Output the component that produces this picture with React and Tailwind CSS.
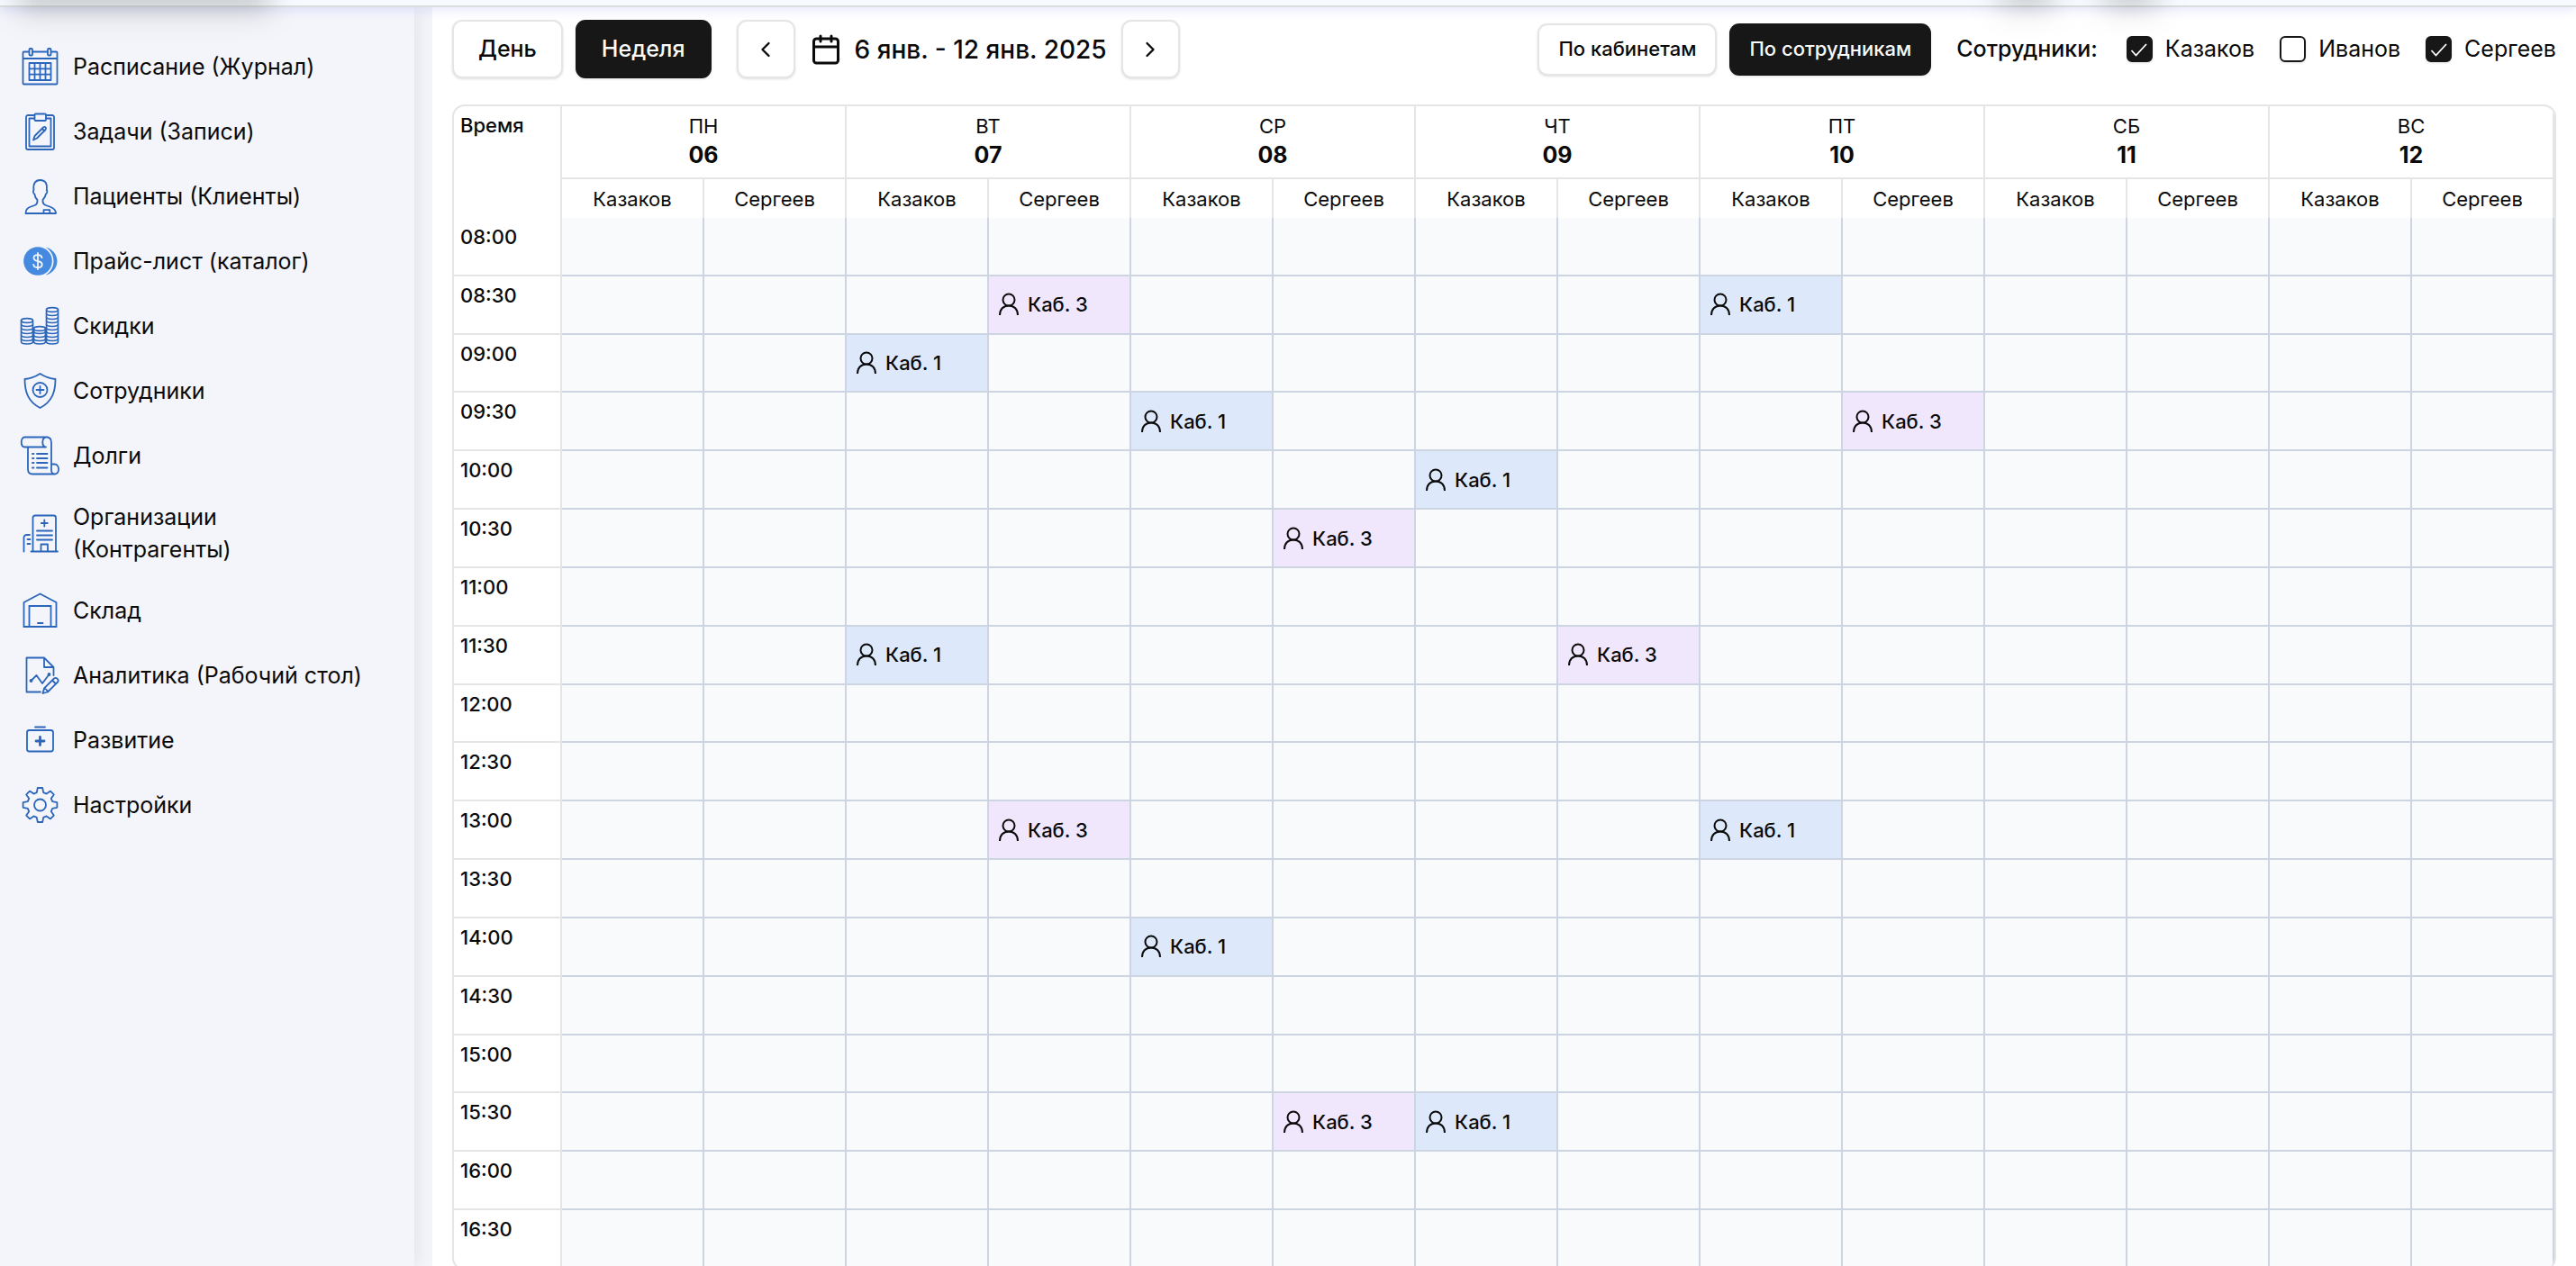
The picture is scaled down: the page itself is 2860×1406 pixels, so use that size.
import { Calendar, ChevronLeft, ChevronRight } from "lucide-react";

const iconProps = {
  viewBox: "0 0 44 44",
  fill: "none",
  stroke: "#2b66bb",
  strokeWidth: 1.8,
  strokeLinejoin: "round",
  strokeLinecap: "round",
  className: "size-11 shrink-0",
  "aria-hidden": true,
};

function ScheduleIcon() {
  return (
    <svg {...iconProps}>
      <path d="M10 5.500H4.500a1 1 0 0 0-1 1v34a1 1 0 0 0 1 1h36a1 1 0 0 0 1-1v-34a1 1 0 0 0-1-1H35M14 5.500h16.500M3.500 13h38" />
      <rect x="10.500" y="2" width="3.500" height="7.500" rx="1" />
      <rect x="31" y="2" width="3.500" height="7.500" rx="1" />
      <path d="M10.500 18h24v19h-24zM16.500 18v19M22.500 18v19M28.500 18v19M10.500 24.300h24M10.500 30.600h24" />
    </svg>
  );
}

function TasksIcon() {
  return (
    <svg {...iconProps}>
      <path d="M16 4H9a2 2 0 0 0-2 2v34a2 2 0 0 0 2 2h27a2 2 0 0 0 2-2V6a2 2 0 0 0-2-2h-7" />
      <path d="M16 7.500h-5.500v31h24v-31H29" />
      <rect x="16.500" y="2.500" width="12.500" height="7.500" rx="1" />
      <path d="m16.500 27 9.500-9.500c2-1.500 4 .5 2.500 2.500L19 29.500l-4 2zM25 19l2.500 2.500" />
    </svg>
  );
}

function PatientsIcon() {
  return (
    <svg {...iconProps}>
      <path d="M6.500 41c0-3.500 1-5.500 4.500-7l5.500-2c2.500-1 3-2.500 3-4.500v-1.500c-2-2-2.800-4-3.200-6.500-1.300-.8-2-3.500-.8-4.500-1-6.500 1.500-11 7-11 6.500 0 8 4.500 7.300 11 1 1 .5 3.700-.9 4.500-.4 2.500-1.400 4.500-3.400 6.500v1.500c0 2 1 3.500 3.500 4.500l5.500 2c3.500 1.500 5.500 3.500 5.500 7z" />
      <path d="M26.500 41v-3.800h6.800V41" />
    </svg>
  );
}

function PriceIcon() {
  return (
    <svg {...iconProps} stroke="none">
      <circle cx="20" cy="22" r="15.800" fill="#438ae0" />
      <path d="M28.500 6.500C35 7.500 41.500 14 41.500 22s-6.500 14.500-13 15.500c5.500-3 9-9 9-15.500s-3.500-12.500-9-15.500z" fill="#438ae0" />
      <path d="M24.500 18.200c-.4-2-2.200-3-4.500-3-2.600 0-4.500 1.200-4.500 3.300 0 2.200 1.800 2.900 4.500 3.500 2.900.6 4.700 1.400 4.700 3.700 0 2.100-2 3.400-4.700 3.400-2.500 0-4.500-1.100-4.800-3.300M20 13v18" fill="none" stroke="#f4f5fa" strokeWidth="1.800" />
    </svg>
  );
}

function CoinStack({ x, tops }) {
  return (
    <g>
      <ellipse cx={x} cy={tops[0]} rx="6.500" ry="2.400" />
      <path d={`M${x - 6.5} ${tops[0]}V39.500c0 3.300 13 3.300 13 0V${tops[0]}`} />
      {tops.slice(1).map((y) => (
        <path key={y} d={`M${x - 6.5} ${y}c0 3.300 13 3.300 13 0`} />
      ))}
    </g>
  );
}

function DiscountIcon() {
  return (
    <svg {...iconProps} strokeWidth="1.600">
      <CoinStack x={8} tops={[16, 20, 24, 28, 32, 36]} />
      <CoinStack x={22} tops={[25, 28, 32, 36]} />
      <CoinStack x={36} tops={[4, 8, 12, 16, 20, 24, 28, 32, 36]} />
    </svg>
  );
}

function StaffIcon() {
  return (
    <svg {...iconProps}>
      <path d="M22.500 3C17 6.500 11.500 8.500 5.500 9c0 14 3.500 25 17 32C36 34 39.500 23 39.500 9c-6-.5-11.500-2.500-17-6z" />
      <circle cx="22.500" cy="21" r="8" />
      <path d="M22.500 17v8M18.500 21h8" />
    </svg>
  );
}

function DebtsIcon() {
  return (
    <svg {...iconProps}>
      <path d="M31 1.500H5.500c-5 0-5 11 0 11H29M28 12.500c-4-2-3.500-11 1.500-11 4 0 5.500 3 5.500 6V38c0 2.500 1.500 4.500 4 4.500M9 12.500V37c0 3.500 2 5.500 5 5.500h25c5.500 0 5.500-11-.5-11H35" />
      <path d="M14 20h1.500M19 20h11.500M14 25h1.500M19 25h11.500M14 30h1.500M19 30h11.500M14 35.500h1.500M19 35.500h11.500" />
    </svg>
  );
}

function OrganizationIcon() {
  return (
    <svg {...iconProps}>
      <path d="M12.500 42.500h29.500M14.500 42.500V5a2.500 2.500 0 0 1 2.500-2.500h20.500A2.500 2.500 0 0 1 40 5v37.500M27.300 7.500v7M23.800 11h7M19 19.500h17M19 24.500h17M19 29.500h17M23.500 42.500v-8h7.500v8M4.500 42.500V27a3 3 0 0 1 3-3h3.500M8.500 29h3M8.500 34h3" />
    </svg>
  );
}

function WarehouseIcon() {
  return (
    <svg {...iconProps} strokeLinejoin="miter">
      <path d="M4.500 13 22.500 3.500 40.500 13v27h-36zM10.500 40V17h24v23M20 36h5.500" />
    </svg>
  );
}

function AnalyticsIcon() {
  return (
    <svg {...iconProps}>
      <path d="M23 40.500H7.500v-38H27L37.500 13v9M27 2.500V13h10.500M12.500 28l6-6 6.500 9 7.500-10" />
      <circle cx="12.500" cy="28" r="1" fill="#2b66bb" />
      <circle cx="32.500" cy="21" r="1" fill="#2b66bb" />
      <path d="m27 36.500 11-11c2.500-2 6 1.500 4 4L31 40.500l-5.500 1.500zM36 27.500l4 4M27 36.500c2 .5 3.500 2 4 4" />
    </svg>
  );
}

function GrowthIcon() {
  return (
    <svg {...iconProps}>
      <rect x="8" y="11" width="29" height="23.500" rx="2.500" />
      <path d="M17 7.500h11" />
      <path d="M22.500 18.500v9M18 23h9" strokeWidth="2.800" />
    </svg>
  );
}

function SettingsIcon() {
  return (
    <svg {...iconProps}>
      <path d="M19.800 3h5.400l1 5.200 3.400 1.400 4.400-3 3.800 3.800-3 4.400 1.400 3.400 5.200 1v5.600l-5.200 1-1.400 3.400 3 4.400-3.800 3.800-4.400-3-3.400 1.400-1 5.200h-5.400l-1-5.200-3.400-1.400-4.400 3-3.800-3.800 3-4.400-1.400-3.400-5.200-1v-5.600l5.200-1 1.400-3.400-3-4.400 3.800-3.800 4.400 3 3.400-1.400z" />
      <circle cx="22.500" cy="22" r="6.500" />
    </svg>
  );
}

const menu = [
  ["Расписание (Журнал)", ScheduleIcon],
  ["Задачи (Записи)", TasksIcon],
  ["Пациенты (Клиенты)", PatientsIcon],
  ["Прайс-лист (каталог)", PriceIcon],
  ["Скидки", DiscountIcon],
  ["Сотрудники", StaffIcon],
  ["Долги", DebtsIcon],
  ["Организации (Контрагенты)", OrganizationIcon],
  ["Склад", WarehouseIcon],
  ["Аналитика (Рабочий стол)", AnalyticsIcon],
  ["Развитие", GrowthIcon],
  ["Настройки", SettingsIcon],
];

const days = [
  ["ПН", "06"],
  ["ВТ", "07"],
  ["СР", "08"],
  ["ЧТ", "09"],
  ["ПТ", "10"],
  ["СБ", "11"],
  ["ВС", "12"],
];

const staff = ["Казаков", "Сергеев"];
const rooms = ["Каб. 1", "Каб. 3"];
const roomColors = ["bg-[#dde9fb]", "bg-[#f1e7fc]"];

const times = Array.from({ length: 18 }, (_, i) => {
  const hour = String(8 + Math.floor(i / 2)).padStart(2, "0");
  return `${hour}:${i % 2 ? "30" : "00"}`;
});

// Column = day index * 2 + staff index.
const bookings = {
  "08:30": [3, 8],
  "09:00": [2],
  "09:30": [4, 9],
  "10:00": [6],
  "10:30": [5],
  "11:30": [2, 7],
  "13:00": [3, 8],
  "14:00": [4],
  "15:30": [5, 6],
};

const columns = Array.from({ length: 14 }, (_, i) => i);

function UserIcon() {
  return (
    <svg viewBox="0 0 22 26" fill="none" stroke="currentColor" strokeWidth="2" className="h-[26px] w-[22px] shrink-0" aria-hidden="true">
      <circle cx="11" cy="8" r="6.500" />
      <path d="M1 25c0-6.500 4-10.500 10-10.500S21 18.500 21 25" />
    </svg>
  );
}

function StaffCheckbox({ name, checked }) {
  return (
    <label className="flex items-center gap-3.5">
      <span className="grid size-[29px] place-items-center">
        <input
          type="checkbox"
          defaultChecked={checked}
          className="peer col-start-1 row-start-1 size-[29px] appearance-none rounded-md border-2 border-[#171717] bg-white shadow-sm checked:bg-[#171717]"
        />
        <svg viewBox="0 0 20 20" fill="none" stroke="white" strokeWidth="1.800" className="invisible col-start-1 row-start-1 size-5 peer-checked:visible" aria-hidden="true">
          <path d="m1.500 11 5 5.500L18 4" />
        </svg>
      </span>
      {name}
    </label>
  );
}

function Sidebar() {
  return (
    <aside className="w-[480px] shrink-0 overflow-hidden bg-[#f4f5fa]">
      <nav className="h-full w-[460px] pt-[30px] shadow-[0_0_22px_rgba(0,0,0,0.1)]">
        <ul>
          {menu.map(([label, Icon]) => (
            <li key={label}>
              <a href="#" className="flex items-center gap-[15px] py-3.5 pr-12 pl-[22px] text-[25px] leading-9">
                <Icon />
                {label}
              </a>
            </li>
          ))}
        </ul>
      </nav>
    </aside>
  );
}

const outlineButton = "border-2 border-[#e5e5e5] bg-white shadow-sm";
const solidButton = "bg-[#171717] text-[#fafafa] shadow-sm";

function Toolbar() {
  return (
    <div className="flex items-center justify-between text-[25px]">
      <div className="flex items-center">
        <button className={`${outlineButton} h-[65px] rounded-[11px] px-[27px] font-medium`}>День</button>
        <button className={`${solidButton} ml-3.5 h-[65px] rounded-[11px] px-[29px] font-medium`}>Неделя</button>
        <button aria-label="Предыдущая неделя" className={`${outlineButton} ml-7 grid size-[65px] place-items-center rounded-[11px]`}>
          <ChevronLeft className="size-7" />
        </button>
        <div className="mx-4 flex items-center gap-3.5">
          <Calendar className="size-9" />
          <h1 className="text-[28px] leading-10 font-medium">6 янв. - 12 янв. 2025</h1>
        </div>
        <button aria-label="Следующая неделя" className={`${outlineButton} grid size-[65px] place-items-center rounded-[11px]`}>
          <ChevronRight className="size-7" />
        </button>
      </div>
      <div className="flex items-center">
        <button className={`${outlineButton} h-[58px] rounded-[11px] px-[21px] text-[22px] font-medium`}>По кабинетам</button>
        <button className={`${solidButton} ml-3.5 h-[58px] rounded-[11px] px-[22px] text-[22px] font-medium`}>По сотрудникам</button>
        <fieldset className="ml-7 flex items-center gap-7">
          <legend className="float-left mr-1 font-medium">Сотрудники:</legend>
          <StaffCheckbox name="Казаков" checked />
          <StaffCheckbox name="Иванов" />
          <StaffCheckbox name="Сергеев" checked />
        </fieldset>
      </div>
    </div>
  );
}

function Schedule() {
  return (
    <div className="mt-[29px] overflow-hidden rounded-[14px] border-2 border-[#e5e5e5]">
      <table className="h-[1291px] w-full table-fixed border-separate border-spacing-0 text-[22px] leading-7">
        <colgroup>
          <col className="w-[120px]" />
        </colgroup>
        <thead>
          <tr>
            <th rowSpan="2" scope="col" className="border-r-2 border-[#e5e5e5] px-[7px] py-[7px] text-left align-top font-medium">
              Время
            </th>
            {days.map(([day, date]) => (
              <th key={day} colSpan="2" scope="colgroup" className="h-[81px] border-r-2 border-b-2 border-[#e5e5e5] py-[7px] font-normal">
                <div>{day}</div>
                <div className="text-[25px] leading-9 font-bold">{date}</div>
              </th>
            ))}
          </tr>
          <tr>
            {columns.map((c) => (
              <th key={c} scope="col" className="h-[43px] border-r-2 border-[#e5e5e5] font-normal">
                {staff[c % 2]}
              </th>
            ))}
          </tr>
        </thead>
        <tbody>
          {times.map((time) => (
            <tr key={time} className="h-16">
              <th scope="row" className="border-r-2 border-b-2 border-[#e5e5e5] px-[7px] pt-[7px] text-left align-top font-medium">
                {time}
              </th>
              {columns.map((c) => {
                const booked = bookings[time]?.includes(c);
                return (
                  <td key={c} className={`border-r-2 border-b-2 border-[#ccd5e1] px-[11px] ${booked ? roomColors[c % 2] : "bg-[#f8fafc]"}`}>
                    {booked && (
                      <div className="flex items-center gap-2.5 font-medium">
                        <UserIcon />
                        {rooms[c % 2]}
                      </div>
                    )}
                  </td>
                );
              })}
            </tr>
          ))}
        </tbody>
      </table>
    </div>
  );
}

export default function App() {
  return (
    <div className="relative flex h-screen flex-col overflow-hidden bg-white font-['Inter',sans-serif] text-[#0a0a0a]">
      <header className="relative z-10 h-2 shrink-0 border-b-2 border-[#dcdddf] bg-[#f7fbff] shadow-[0_2px_12px_rgba(80,80,240,0.18)]" />
      <div className="flex min-h-0 flex-1">
        <Sidebar />
        <main className="min-w-0 flex-1 px-[22px] pt-3.5">
          <Toolbar />
          <Schedule />
        </main>
      </div>
      <div className="pointer-events-none absolute -top-8 left-5 z-20 h-11 w-[280px] bg-[#30352c]/25 blur-[16px]" />
      <div className="pointer-events-none absolute -top-8 right-[580px] z-20 h-10 w-[60px] bg-[#30352c]/25 blur-[16px]" />
      <div className="pointer-events-none absolute -top-8 right-[465px] z-20 h-10 w-[60px] bg-[#30352c]/25 blur-[16px]" />
    </div>
  );
}
